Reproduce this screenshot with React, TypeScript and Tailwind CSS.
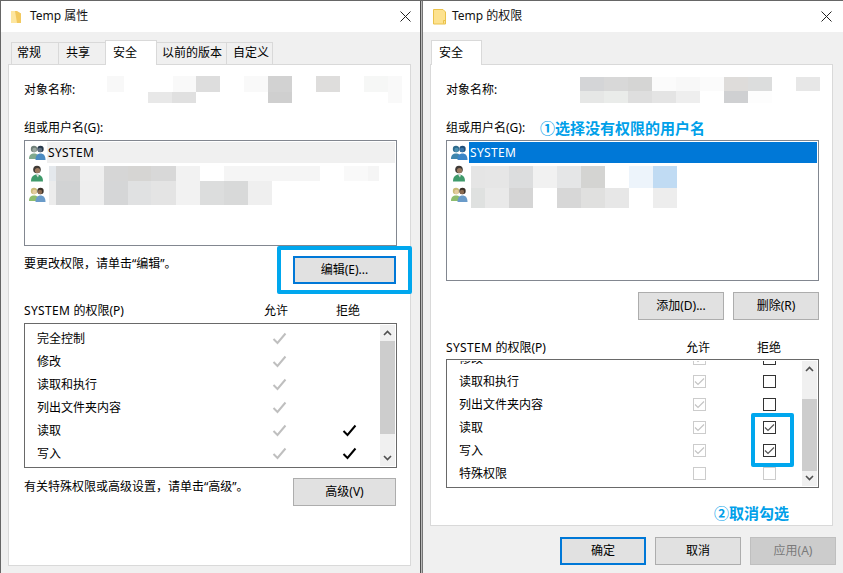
import React from "react";

type Cell = [number, string];
const FONT = "font-['Noto_Sans','Noto_Sans_CJK_SC',sans-serif]";

function Mosaic({ rows }: { rows: { h: number; cells: Cell[] }[] }) {
  return (
    <div className="flex shrink-0 flex-col">
      {rows.map((r, i) => (
        <div key={i} className="flex" style={{ height: r.h }}>
          {r.cells.map((c, j) => (
            <div key={j} style={{ width: c[0], backgroundColor: c[1] }} />
          ))}
        </div>
      ))}
    </div>
  );
}

function Folder({ wide }: { wide?: boolean }) {
  return wide ? (
    <svg width="13" height="16" viewBox="0 0 13 16" className="shrink-0">
      <path d="M.5.5h9.500l2.500 2.500v12H.5z" fill="#fde28f" stroke="#eac24a" />
      <path d="M10.500 14.500v-3h2" stroke="#eac24a" strokeWidth="1" fill="none" />
    </svg>
  ) : (
    <svg width="11" height="14" viewBox="0 0 11 14" className="shrink-0">
      <path d="M0 1h5l5 2.500V13H0z" fill="#fde6a0" />
      <path d="M4 1h2l4 2.500V13H6z" fill="#f2c95f" />
    </svg>
  );
}

function CloseX() {
  return (
    <svg width="11" height="11" viewBox="0 0 11 11" className="shrink-0">
      <path d="M.5.5l10 10M10.500.5l-10 10" stroke="#222" strokeWidth="1" fill="none" />
    </svg>
  );
}

function GroupIcon({ a, aFace, b, c, cFace, d }: { a: string; aFace: string; b: string; c: string; cFace: string; d: string }) {
  return (
    <svg width="17" height="16" viewBox="0 0 17 16">
      <circle cx="5" cy="4" r="3.200" fill={a} />
      <circle cx="5.500" cy="5" r="2.200" fill={aFace} />
      <path d="M0 14c0-4 2-5.500 5-5.500s5 1.500 5 5.500z" fill={b} />
      <circle cx="11.500" cy="4" r="3.200" fill={c} />
      <circle cx="11" cy="5" r="2.200" fill={cFace} />
      <path d="M6.500 15c0-4.500 2-6.500 5-6.500s5 2 5 6.500z" fill={d} />
    </svg>
  );
}

function UserIcon() {
  return (
    <svg width="14" height="17" viewBox="0 0 14 17">
      <circle cx="7" cy="4.500" r="3.800" fill="#3f3a36" />
      <circle cx="7.500" cy="5.500" r="2.600" fill="#9c7a60" />
      <path d="M1 16.500c0-5 2.500-7 6-7s6 2 6 7z" fill="#3f9a6b" />
      <path d="M6 9.500h3l-1 3z" fill="#e8e8e8" />
    </svg>
  );
}

function Chk({ color }: { color: string }) {
  return (
    <svg width="15" height="13" viewBox="0 0 15 13">
      <path d="M1.500 7l4 4 8-9.500" fill="none" stroke={color} strokeWidth="2" />
    </svg>
  );
}

function Box({ dark, checked }: { dark?: boolean; checked?: boolean }) {
  return (
    <div
      className={
        "flex h-[13px] w-[13px] items-center justify-center border bg-white " +
        (dark ? "border-[#333333]" : "border-[#cccccc]")
      }
    >
      {checked && (
        <svg width="11" height="9" viewBox="0 0 11 9">
          <path d="M1 4.500l3 3 6-6" fill="none" stroke={dark ? "#555555" : "#c4c4c4"} strokeWidth="1.200" />
        </svg>
      )}
    </div>
  );
}

function Btn({
  children,
  w = "w-[86px]",
  primary,
  disabled,
}: {
  children: React.ReactNode;
  w?: string;
  primary?: boolean;
  disabled?: boolean;
}) {
  return (
    <div
      className={
        "flex h-[28px] items-center justify-center text-[12px] " +
        w +
        " " +
        (primary
          ? "border-2 border-[#0078d7] bg-[#e1e1e1] text-black"
          : disabled
            ? "border border-[#bfbfbf] bg-[#cccccc] text-[#7a7a7a]"
            : "border border-[#adadad] bg-[#e1e1e1] text-black")
      }
    >
      {children}
    </div>
  );
}

function ScrollBar({ gap, thumb }: { gap: number; thumb: number }) {
  return (
    <div className="flex w-[15px] shrink-0 flex-col bg-[#f0f0f0]">
      <div className="flex h-[16px] shrink-0 items-center justify-center">
        <svg width="9" height="6" viewBox="0 0 9 6">
          <path d="M1 5l3.500-3.500L8 5" fill="none" stroke="#505050" strokeWidth="1.600" />
        </svg>
      </div>
      <div className="bg-[#cdcdcd]" style={{ height: thumb, marginTop: gap }} />
      <div className="flex flex-1 items-end justify-center pb-[5px]">
        <svg width="9" height="6" viewBox="0 0 9 6">
          <path d="M1 1l3.500 3.500L8 1" fill="none" stroke="#505050" strokeWidth="1.600" />
        </svg>
      </div>
    </div>
  );
}

function TitleBar({ title, wide }: { title: string; wide?: boolean }) {
  return (
    <div className="flex h-[31px] shrink-0 items-center bg-white">
      <div className="ml-[10px] w-[19px]">
        <Folder wide={wide} />
      </div>
      <div className="flex-1 pb-px text-[12px] text-[#111]">{title}</div>
      <div className={(wide ? "mr-[6px]" : "mr-[4px]") + " flex w-[22px] justify-center"}>
        <CloseX />
      </div>
    </div>
  );
}

function Tab({ label, w, active, pl }: { label: string; w: string; active?: boolean; pl: string }) {
  return (
    <div
      className={
        "flex items-center border border-[#d9d9d9] text-[12px] text-black " +
        w +
        " " +
        pl +
        " " +
        (active
          ? "relative z-10 -mb-px h-[25px] border-b-0 bg-white pb-[1px]"
          : "-ml-px h-[22px] border-b-0 bg-[#f0f0f0] pb-px")
      }
    >
      <span>{label}</span>
    </div>
  );
}

const Sys = () => <span className="tracking-[0.35px]">SYSTEM</span>;

const allowRows = ["完全控制", "修改", "读取和执行", "列出文件夹内容", "读取", "写入"];

export default function App() {
  return (
    <div className={"flex h-[573px] w-[843px] overflow-hidden bg-[#666666] leading-none " + FONT}>
      {/* left window */}
      <div className="ml-px mt-px flex h-[572px] w-[419px] flex-col bg-[#f0f0f0]">
        <TitleBar title="Temp 属性" />
        <div className="flex h-[32px] items-end pl-[9px]">
          <Tab label="常规" w="w-[48px] ml-px" pl="pl-[5px]" />
          <Tab label="共享" w="w-[48px]" pl="pl-[7px]" />
          <Tab label="安全" w="w-[52px] -ml-px" pl="pl-[7px]" active />
          <Tab label="以前的版本" w="w-[71px]" pl="pl-[5px]" />
          <Tab label="自定义" w="w-[47px]" pl="pl-[6px]" />
        </div>
        <div className="ml-[7px] flex h-[502px] w-[403px] flex-col border border-[#d9d9d9] bg-white pl-[15px] pr-[13px]">
          <div className="mt-[11px] flex h-[27px] items-center">
            <div className="w-[83px] shrink-0 text-[12px] text-black">对象名称:</div>
            <Mosaic
              rows={[
                { h: 16, cells: [[17, "#f8f8f8"], [49, "#ffffff"], [23, "#f9f9f9"], [24, "#dddddd"], [24, "#ffffff"], [24, "#f9f9f9"], [24, "#d2d2d2"], [24, "#ffffff"], [24, "#dedddc"], [24, "#ffffff"], [24, "#f6f7f6"], [14, "#f9f9f9"]] },
                { h: 11, cells: [[41, "#ffffff"], [24, "#e8e8e8"], [24, "#e0e0e0"], [72, "#ffffff"], [24, "#cfcfcf"], [96, "#ffffff"], [14, "#f9f9f9"]] },
              ]}
            />
          </div>
          <div className="mt-[19px] text-[12px] leading-[12px] text-black">组或用户名(G):</div>
          <div className="mt-[6px] flex h-[106px] w-[373px] border border-[#828790] p-px">
            <div className="flex w-[21px] shrink-0 flex-col items-center pl-px">
              <div className="flex h-[21px] items-center"><GroupIcon a="#6f7f78" aFace="#9aa79f" b="#7fa98d" c="#26384a" cFace="#5f6f80" d="#4a8bc2" /></div>
              <div className="flex h-[21px] items-center"><UserIcon /></div>
              <div className="flex h-[21px] items-center"><GroupIcon a="#c9bb78" aFace="#e3cba0" b="#8ebd6e" c="#3a3028" cFace="#8a6a50" d="#6a9bc9" /></div>
            </div>
            <div className="flex flex-1 flex-col">
              <div className="flex h-[21px] items-center bg-[#f0f0f0] pl-px text-[12px] text-black"><Sys /></div>
              <div className="mt-[3px] pl-[2px]">
                <Mosaic
                  rows={[
                    { h: 15, cells: [[7, "#e4e8ec"], [24, "#d5d5d5"], [24, "#efefef"], [24, "#d6d6d6"], [23, "#d6d5d3"], [25, "#d8d8d8"], [24, "#f2f2f2"], [24, "#ffffff"], [96, "#f5f5f5"], [24, "#ffffff"], [24, "#f9f9f9"], [11, "#f5f5f5"]] },
                    { h: 24, cells: [[7, "#ececec"], [24, "#d2d3d4"], [24, "#eeeeee"], [24, "#d5d6d7"], [23, "#e0e1e2"], [25, "#e4e4e4"], [24, "#f2f2f2"], [24, "#dcdddd"], [24, "#d8d9d9"], [24, "#efefef"]] },
                  ]}
                />
              </div>
            </div>
          </div>
          <div className="relative mt-[10px] flex h-[28px] items-start justify-between pr-px">
            <div className="mt-[2px] text-[12px] leading-[12px] text-black">要更改权限，请单击“编辑”。</div>
            <Btn w="w-[103px]" primary>编辑(E)...</Btn>
            <div className="absolute -top-[10px] left-[253px] h-[48px] w-[135px] rounded-[2px] border-4 border-[#00a7ee]" />
          </div>
          <div className="mt-[21px] flex h-[12px] items-center text-[12px] text-black">
            <div className="w-[240px]"><Sys /> 的权限(P)</div>
            <div className="w-[72px]">允许</div>
            <div>拒绝</div>
          </div>
          <div className="mt-[6px] flex h-[145px] w-[373px] border border-[#696969] p-px">
            <div className="flex flex-1 flex-col pt-[2px]">
              {allowRows.map((name, i) => (
                <div key={name} className="flex h-[23px] items-center text-[12px] text-black">
                  <div className="w-[246px] pl-[11px]">{name}</div>
                  <div className="w-[70px]"><Chk color="#bfbfbf" /></div>
                  {i >= 4 && <Chk color="#000000" />}
                </div>
              ))}
            </div>
            <ScrollBar gap={0} thumb={93} />
          </div>
          <div className="mt-[10px] flex h-[28px] items-start justify-between pr-px">
            <div className="mt-[3px] text-[12px] leading-[12px] text-black">有关特殊权限或高级设置，请单击“高级”。</div>
            <Btn w="w-[103px]">高级(V)</Btn>
          </div>
        </div>
      </div>

      {/* seam between the two windows */}
      <div className="mt-px w-px bg-[#4f4f4f]" />
      <div className="mt-px w-px bg-[#b8b8b8]" />

      {/* right window */}
      <div className="mt-px flex h-[572px] w-[421px] flex-col border-l border-l-[#757575] bg-[#f0f0f0]">
        <TitleBar title="Temp 的权限" wide />
        <div className="flex h-[32px] items-end pl-[8px]">
          <Tab label="安全" w="w-[51px]" pl="pl-[7px]" active />
        </div>
        <div className="ml-[7px] flex h-[462px] w-[403px] flex-col border border-[#d9d9d9] bg-white pl-[15px] pr-[13px]">
          <div className="mt-[12px] flex h-[26px] items-center">
            <div className="w-[134px] shrink-0 text-[12px] text-black">对象名称:</div>
            <Mosaic
              rows={[
                { h: 14, cells: [[24, "#d4d5d7"], [24, "#d8d8d8"], [24, "#d5d5d4"], [24, "#fbfbfb"], [24, "#f8f8f8"], [24, "#fbfbfb"], [24, "#dedcda"], [24, "#dcdddd"], [24, "#ffffff"], [24, "#e7e7e7"]] },
                { h: 12, cells: [[24, "#e6e7e6"], [24, "#eaecea"], [24, "#dedede"], [24, "#e4e4e4"], [24, "#eeeeee"], [24, "#ffffff"], [24, "#cfd0d2"], [24, "#fdfdfd"]] },
              ]}
            />
          </div>
          <div className="mt-[17px] flex h-[16px] items-center">
            <div className="w-[94px] text-[12px] text-black">组或用户名(G):</div>
            <div className="text-[15px] font-bold text-[#00a0e9]">①选择没有权限的用户名</div>
          </div>
          <div className="mt-[4px] flex h-[141px] w-[373px] border border-[#828790] p-px">
            <div className="flex w-[21px] shrink-0 flex-col items-center pl-px">
              <div className="flex h-[21px] items-center"><GroupIcon a="#2d6a8c" aFace="#4a8fb0" b="#3f86ad" c="#1f4f7c" cFace="#3a74a8" d="#3c86c8" /></div>
              <div className="flex h-[21px] items-center"><UserIcon /></div>
              <div className="flex h-[21px] items-center"><GroupIcon a="#c9bb78" aFace="#e3cba0" b="#8ebd6e" c="#3a3028" cFace="#8a6a50" d="#6a9bc9" /></div>
            </div>
            <div className="flex flex-1 flex-col">
              <div className="flex h-[21px] items-center bg-[#0078d7] pl-px text-[12px] text-white"><Sys /></div>
              <div className="mt-[3px] pl-[2px]">
                <Mosaic
                  rows={[
                    { h: 22, cells: [[14, "#e5e5e5"], [24, "#e6e6e6"], [24, "#dcddde"], [24, "#f1f1f1"], [24, "#e5e6e7"], [24, "#d4d4d2"], [24, "#ffffff"], [24, "#edf4fb"], [24, "#c0dbf3"]] },
                    { h: 20, cells: [[14, "#dfe1e0"], [24, "#e9e9e9"], [24, "#d5d5d5"], [24, "#ffffff"], [24, "#d7d7d7"], [24, "#e0e0df"], [24, "#e7e7e7"], [24, "#ffffff"], [24, "#ededed"]] },
                  ]}
                />
              </div>
            </div>
          </div>
          <div className="mt-[11px] flex justify-end gap-[9px]">
            <Btn>添加(D)...</Btn>
            <Btn>删除(R)</Btn>
          </div>
          <div className="mt-[22px] flex h-[12px] items-center text-[12px] text-black">
            <div className="w-[240px]"><Sys /> 的权限(P)</div>
            <div className="w-[71px]">允许</div>
            <div>拒绝</div>
          </div>
          <div className="mt-[5px] flex h-[129px] w-[373px] border border-[#696969] p-px">
            <div className="relative flex flex-1 flex-col overflow-hidden">
              <div className="-mt-[14px] flex flex-col">
                {[
                  ["修改", true, false, true],
                  ["读取和执行", true, false, true],
                  ["列出文件夹内容", true, false, true],
                  ["读取", true, true, true],
                  ["写入", true, true, true],
                  ["特殊权限", false, false, false],
                ].map(([name, allow, deny, dark]) => (
                  <div key={name as string} className="flex h-[23px] shrink-0 items-center text-[12px] text-black">
                    <div className="w-[245px] pl-[11px]">{name as string}</div>
                    <div className="w-[70px]"><Box checked={allow as boolean} /></div>
                    <Box checked={deny as boolean} dark={dark as boolean} />
                  </div>
                ))}
              </div>
              <div className="absolute left-[303px] top-[52px] h-[54px] w-[43px] rounded-[2px] border-4 border-[#00a7ee]" />
            </div>
            <ScrollBar gap={22} thumb={72} />
          </div>
          <div className="mt-[16px] pl-[268px] text-[15px] font-bold leading-[18px] text-[#00a0e9]">②取消勾选</div>
        </div>
        <div className="ml-[137px] mt-[11px] flex gap-[9px]">
          <Btn primary>确定</Btn>
          <Btn>取消</Btn>
          <Btn disabled>应用(A)</Btn>
        </div>
      </div>
    </div>
  );
}
